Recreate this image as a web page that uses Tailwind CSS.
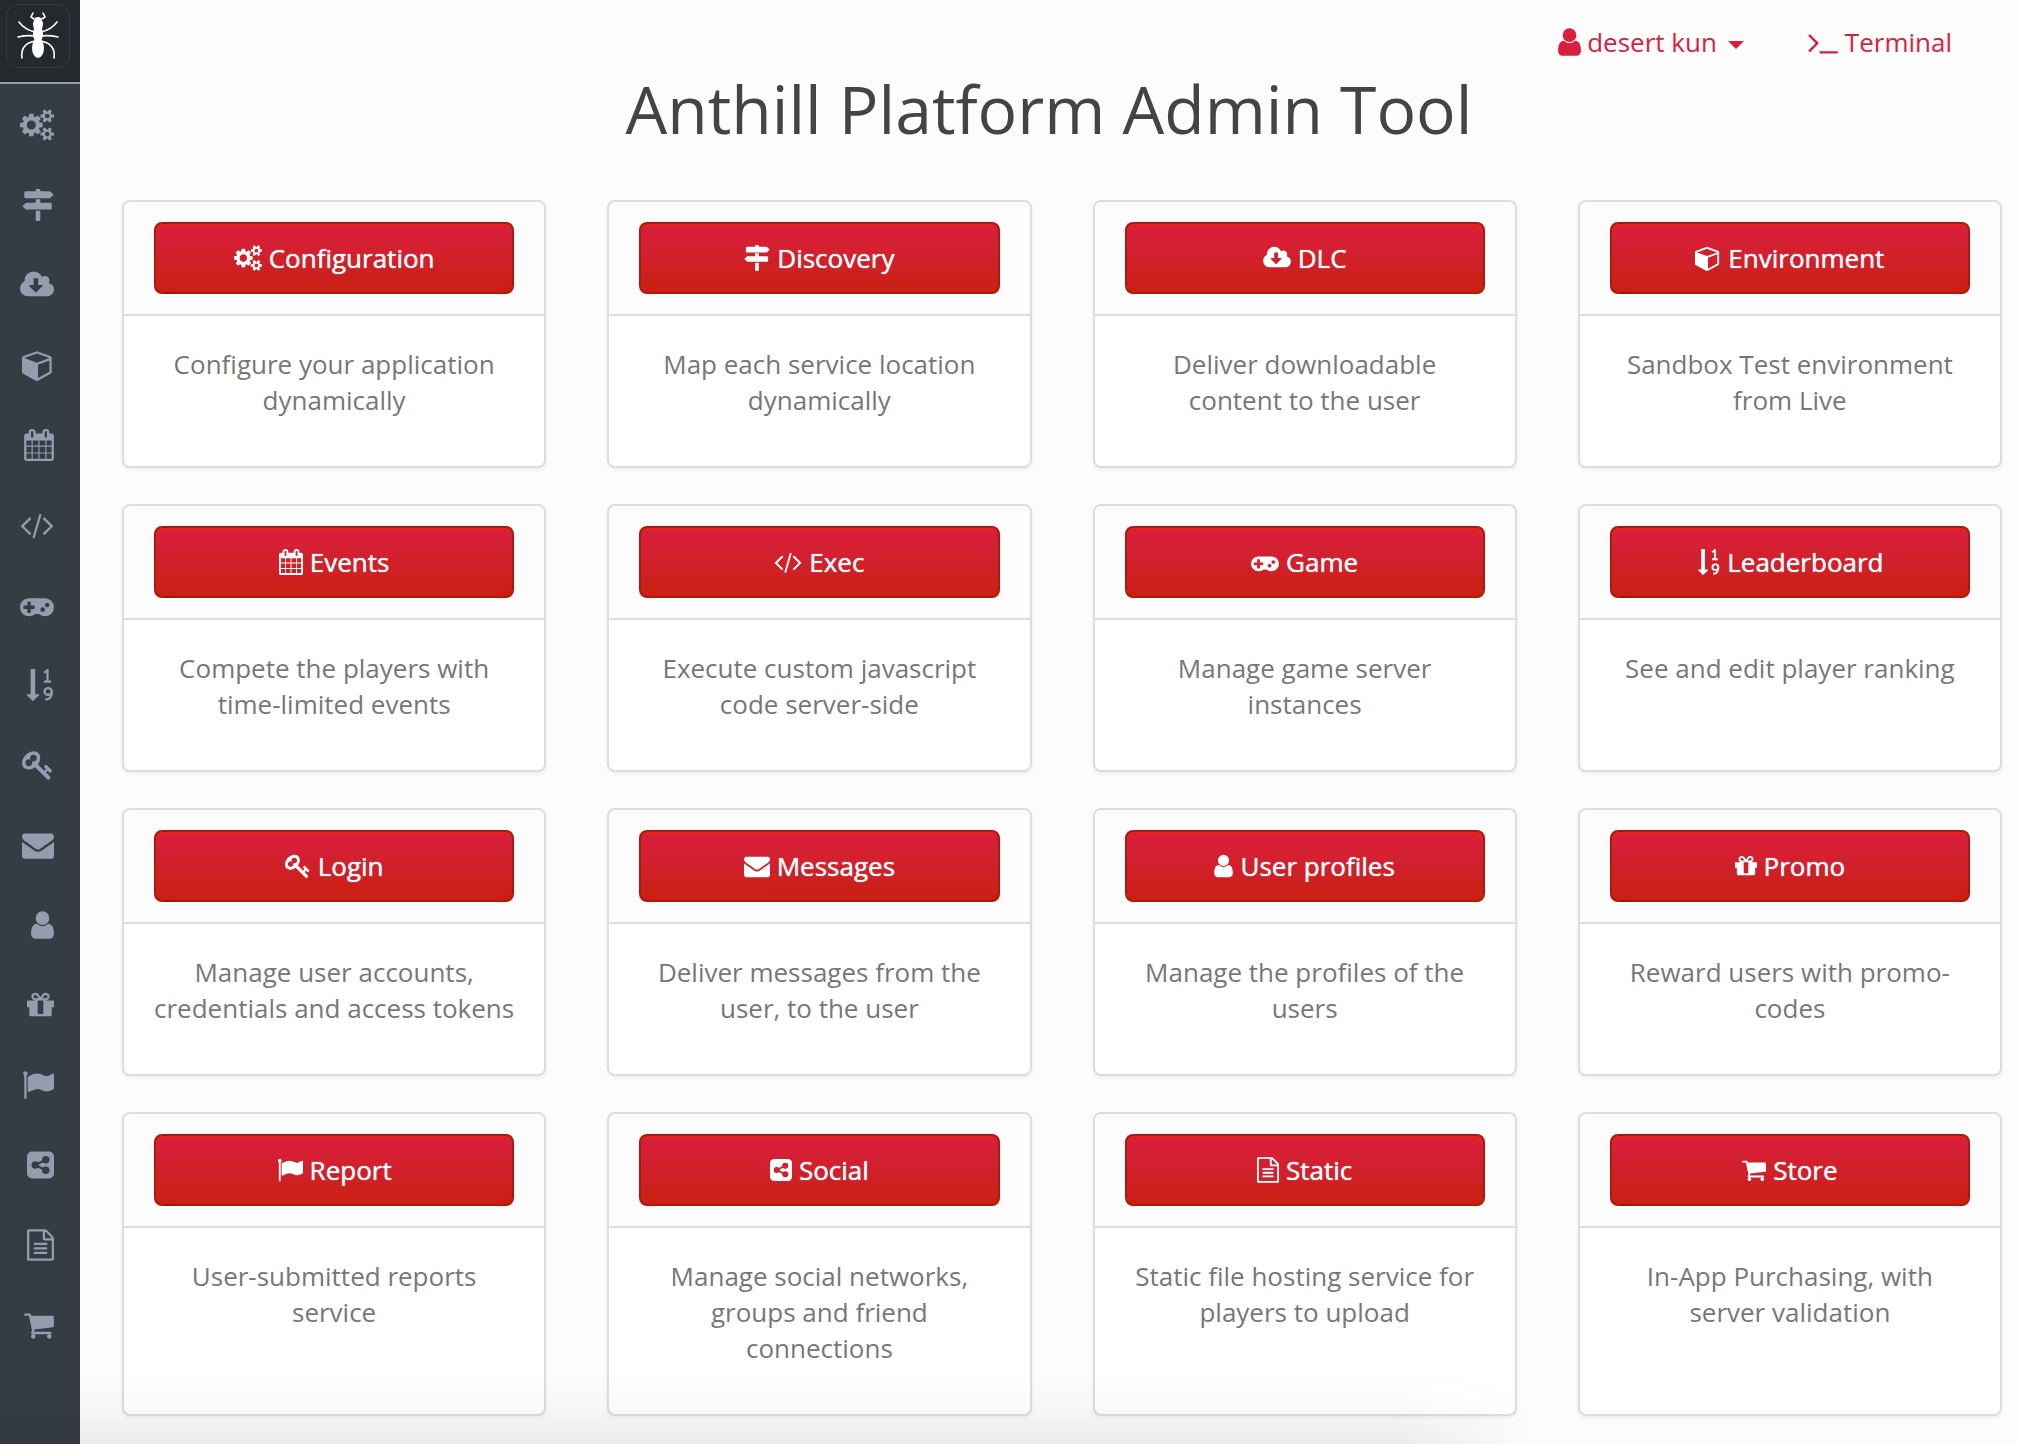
<!DOCTYPE html>
<html lang="en">
<head>
<meta charset="utf-8">
<title>Anthill Platform Admin Tool</title>
<script src="https://cdn.jsdelivr.net/npm/@tailwindcss/browser@4"></script>
</head>
<body class="relative min-h-screen bg-[#fcfcfc] font-['Open_Sans',sans-serif] text-[26px] leading-9 text-[#777]">
<svg class="absolute size-0" aria-hidden="true">
  <symbol id="cogs" viewBox="-64 0 1920 1792"><path d="M832 896q0-106-75-181t-181-75-181 75-75 181 75 181 181 75 181-75 75-181zm768 512q0-52-38-90t-90-38-90 38-38 90q0 53 37.5 90.5t90.5 37.5 90.5-37.5 37.5-90.5zm0-1024q0-52-38-90t-90-38-90 38-38 90q0 53 37.5 90.5t90.5 37.5 90.5-37.5 37.5-90.5zm-384 421v185q0 10-7 19.5t-16 10.5l-155 24q-11 35-32 76 34 48 90 115 7 11 7 20 0 12-7 19-23 30-82.5 89.5t-78.5 59.5q-11 0-21-7l-115-90q-37 19-77 31-11 108-23 155-7 24-30 24h-186q-11 0-20-7.5t-10-17.5l-23-153q-34-10-75-31l-118 89q-7 7-20 7-11 0-21-8-144-133-144-160 0-9 7-19 10-14 41-53t47-61q-23-44-35-82l-152-24q-10-1-17-9.5t-7-19.5v-185q0-10 7-19.5t16-10.5l155-24q11-35 32-76-34-48-90-115-7-11-7-20 0-12 7-20 22-30 82-89t79-59q11 0 21 7l115 90q34-18 77-32 11-108 23-154 7-24 30-24h186q11 0 20 7.5t10 17.5l23 153q34 10 75 31l118-89q8-7 20-7 11 0 21 8 144 133 144 160 0 8-7 19-12 16-42 54t-45 60q23 48 34 82l152 23q10 2 17 10.5t7 19.5zm640 533v140q0 16-149 31-12 27-30 52 51 113 51 138 0 4-4 7-122 71-124 71-8 0-46-47t-52-68q-20 2-30 2t-30-2q-14 21-52 68t-46 47q-2 0-124-71-4-3-4-7 0-25 51-138-18-25-30-52-149-15-149-31v-140q0-16 149-31 13-29 30-52-51-113-51-138 0-4 4-7 4-2 35-20t59-34 30-16q8 0 46 46.5t52 67.5q20-2 30-2t30 2q51-71 92-112l6-2q4 0 124 70 4 3 4 7 0 25-51 138 17 23 30 52 149 15 149 31zm0-1024v140q0 16-149 31-12 27-30 52 51 113 51 138 0 4-4 7-122 71-124 71-8 0-46-47t-52-68q-20 2-30 2t-30-2q-14 21-52 68t-46 47q-2 0-124-71-4-3-4-7 0-25 51-138-18-25-30-52-149-15-149-31v-140q0-16 149-31 13-29 30-52-51-113-51-138 0-4 4-7 4-2 35-20t59-34 30-16q8 0 46 46.5t52 67.5q20-2 30-2t30 2q51-71 92-112l6-2q4 0 124 70 4 3 4 7 0 25-51 138 17 23 30 52 149 15 149 31z"/></symbol>
  <symbol id="signs" viewBox="0 0 1792 1792"><path d="M1745 297q10 10 10 23t-10 23l-141 141q-28 28-68 28h-1344q-26 0-45-19t-19-45v-256q0-26 19-45t45-19h576v-64q0-26 19-45t45-19h128q26 0 45 19t19 45v64h512q40 0 68 28zm-977 919h256v512q0 26-19 45t-45 19h-128q-26 0-45-19t-19-45v-512zm832-448q26 0 45 19t19 45v256q0 26-19 45t-45 19h-1344q-40 0-68-28l-141-141q-10-10-10-23t10-23l141-141q28-28 68-28h512v-192h256v192h576z"/></symbol>
  <symbol id="cloud" viewBox="0 0 1920 1792"><path d="M1280 928q0-14-9-23t-23-9h-224v-352q0-13-9.5-22.5t-22.5-9.5h-192q-13 0-22.5 9.5t-9.5 22.5v352h-224q-13 0-22.5 9.5t-9.5 22.5q0 14 9 23l352 352q9 9 23 9t23-9l351-351q10-12 10-24zm640 224q0 159-112.5 271.5t-271.5 112.5h-1088q-185 0-316.5-131.5t-131.5-316.5q0-130 70-240t188-165q-2-30-2-43 0-212 150-362t362-150q156 0 285.5 87t188.5 231q71-62 166-62 106 0 181 75t75 181q0 76-41 138 130 31 213.5 135.5t83.5 238.5z"/></symbol>
  <symbol id="cube" viewBox="0 0 1792 1792"><path d="M896 1629l640-349v-636l-640 233v752zm-64-865l698-254-698-254-698 254zm832-252v768q0 35-18 65t-49 47l-704 384q-28 16-61 16t-61-16l-704-384q-31-17-49-47t-18-65v-768q0-40 23-73t61-47l704-256q22-8 44-8t44 8l704 256q38 14 61 47t23 73z"/></symbol>
  <symbol id="calendar" viewBox="64 0 1664 1792"><path d="M192 1664h288v-288h-288v288zm352 0h320v-288h-320v288zm-352-352h288v-320h-288v320zm352 0h320v-320h-320v320zm-352-384h288v-288h-288v288zm736 736h320v-288h-320v288zm-384-736h320v-288h-320v288zm768 736h288v-288h-288v288zm-384-352h320v-320h-320v320zm-352-864v-288q0-13-9.5-22.5t-22.5-9.5h-64q-13 0-22.5 9.5t-9.5 22.5v288q0 13 9.5 22.5t22.5 9.5h64q13 0 22.5-9.5t9.5-22.5zm736 864h288v-320h-288v320zm-384-384h320v-288h-320v288zm384 0h288v-288h-288v288zm32-480v-288q0-13-9.5-22.5t-22.5-9.5h-64q-13 0-22.5 9.5t-9.5 22.5v288q0 13 9.5 22.5t22.5 9.5h64q13 0 22.5-9.5t9.5-22.5zm384-64v1280q0 52-38 90t-90 38h-1408q-52 0-90-38t-38-90v-1280q0-52 38-90t90-38h128v-96q0-66 47-113t113-47h64q66 0 113 47t47 113v96h384v-96q0-66 47-113t113-47h64q66 0 113 47t47 113v96h128q52 0 90 38t38 90z"/></symbol>
  <symbol id="code" viewBox="64 0 1920 1792"><path d="M681 1399l-50 50q-10 10-23 10t-23-10l-466-466q-10-10-10-23t10-23l466-466q10-10 23-10t23 10l50 50q10 10 10 23t-10 23l-393 393 393 393q10 10 10 23t-10 23zm591-1067l-373 1291q-4 13-15.5 19.5t-23.5 2.5l-62-17q-13-4-19.5-15.5t-2.5-24.5l373-1291q4-13 15.5-19.5t23.5-2.5l62 17q13 4 19.5 15.5t2.5 24.5zm657 651l-466 466q-10 10-23 10t-23-10l-50-50q-10-10-10-23t10-23l393-393-393-393q-10-10-10-23t10-23l50-50q10-10 23-10t23 10l466 466q10 10 10 23t-10 23z"/></symbol>
  <symbol id="gamepad" viewBox="0 0 1920 1792"><path d="M832 1088v-128q0-14-9-23t-23-9h-192v-192q0-14-9-23t-23-9h-128q-14 0-23 9t-9 23v192h-192q-14 0-23 9t-9 23v128q0 14 9 23t23 9h192v192q0 14 9 23t23 9h128q14 0 23-9t9-23v-192h192q14 0 23-9t9-23zm576 64q0-53-37.5-90.5t-90.5-37.5-90.5 37.5-37.5 90.5 37.5 90.5 90.5 37.5 90.5-37.5 37.5-90.5zm256-256q0-53-37.5-90.5t-90.5-37.5-90.5 37.5-37.5 90.5 37.5 90.5 90.5 37.5 90.5-37.5 37.5-90.5zm256 128q0 212-150 362t-362 150q-192 0-338-128h-220q-146 128-338 128-212 0-362-150t-150-362 150-362 362-150h896q212 0 362 150t150 362z"/></symbol>
  <symbol id="sort" viewBox="0 0 1664 1792"><path d="M844 1440q0 12-10 24l-319 319q-10 9-23 9-12 0-23-9l-320-320q-15-16-7-35 8-20 30-20h192v-1376q0-14 9-23t23-9h192q14 0 23 9t9 23v1376h192q14 0 23 9t9 23z"/><g fill="none" stroke="currentColor" stroke-width="125"><path d="M1120 215l190-150v640M1110 705h400"/><ellipse cx="1345" cy="1255" rx="205" ry="190"/><path d="M1550 1255q20 460-370 455"/></g></symbol>
  <symbol id="key" viewBox="0 0 1792 1792"><path d="M832 512q0-80-56-136t-136-56-136 56-56 136q0 42 19 83-41-19-83-19-80 0-136 56t-56 136 56 136 136 56 136-56 56-136q0-42-19-83 41 19 83 19 80 0 136-56t56-136zm851 704q0 17-49 66t-66 49q-9 0-28.5-16t-36.5-33-38.5-40-24.5-26l-96 96 220 220q28 28 28 68 0 42-39 81t-81 39q-40 0-68-28l-671-671q-176 131-365 131-163 0-265.5-102.5t-102.5-265.5q0-160 95-313t248-248 313-95q163 0 265.5 102.5t102.5 265.5q0 189-131 365l355 355 96-96q-3-3-26-24.5t-40-38.5-33-36.5-16-28.5q0-17 49-66t66-49q13 0 23 10 6 6 46 44.5t82 79.5 86.5 86 73 78 28.5 41z"/></symbol>
  <symbol id="envelope" viewBox="0 0 1792 1792"><path d="M1792 710v794q0 66-47 113t-113 47h-1472q-66 0-113-47t-47-113v-794q44 49 101 87 362 246 497 345 57 42 92.5 65.5t94.5 48 110 24.5h2q51 0 110-24.5t94.5-48 92.5-65.5q170-123 498-345 57-39 100-87zm0-294q0 79-49 151t-122 123q-376 261-468 325-10 7-42.5 30.5t-54 38-52 32.5-57.5 27-50 9h-2q-23 0-50-9t-57.5-27-52-32.5-54-38-42.5-30.5q-91-64-262-182.5t-205-142.5q-62-42-117-115.5t-55-136.5q0-78 41.5-130t118.5-52h1472q65 0 112.5 47t47.5 113z"/></symbol>
  <symbol id="user" viewBox="256 0 1280 1792"><path d="M1536 1399q0 109-62.5 187t-150.5 78h-854q-88 0-150.5-78t-62.5-187q0-85 8.5-160.5t31.5-152 58.5-131 94-89 134.5-34.5q131 128 313 128t313-128q76 0 134.5 34.5t94 89 58.5 131 31.5 152 8.5 160.5zm-256-887q0 159-112.5 271.5t-271.5 112.5-271.5-112.5-112.5-271.5 112.5-271.5 271.5-112.5 271.5 112.5 112.5 271.5z"/></symbol>
  <symbol id="gift" viewBox="128 0 1536 1792"><path d="M1056 1356v-716h-320v716q0 25 18 38.5t46 13.5h192q28 0 46-13.5t18-38.5zm-456-844h195l-126-161q-26-31-69-31-40 0-68 28t-28 68 28 68 68 28zm688-96q0-40-28-68t-68-28q-43 0-69 31l-125 161h194q40 0 68-28t28-68zm376 256v320q0 14-9 23t-23 9h-96v416q0 40-28 68t-68 28h-1088q-40 0-68-28t-28-68v-416h-96q-14 0-23-9t-9-23v-320q0-14 9-23t23-9h440q-93 0-158.5-65.5t-65.5-158.5 65.5-158.5 158.5-65.5q107 0 168 77l128 165 128-165q61-77 168-77 93 0 158.5 65.5t65.5 158.5-65.5 158.5-158.5 65.5h440q14 0 23 9t9 23z"/></symbol>
  <symbol id="flag" viewBox="0 0 1792 1792"><path d="M320 256q0 72-64 110v1266q0 13-9.5 22.5t-22.5 9.5h-64q-13 0-22.5-9.5t-9.5-22.5v-1266q-64-38-64-110 0-53 37.5-90.5t90.5-37.5 90.5 37.5 37.5 90.5zm1472 64v763q0 25-12.5 38.5t-39.5 27.5q-215 116-369 116-61 0-123.5-22t-108.5-48-115.5-48-142.5-22q-192 0-464 146-17 9-33 9-26 0-45-19t-19-45v-742q0-32 31-55 21-14 79-43 236-120 421-120 107 0 200 29t219 88q38 19 88 19 54 0 117.5-21t110-47 88-47 54.5-21q26 0 45 19t19 45z"/></symbol>
  <mask id="share-holes" maskUnits="userSpaceOnUse" x="0" y="0" width="1536" height="1792"><rect width="1536" height="1792" fill="#fff"/><path d="M1067 597L469 896l598 299" fill="none" stroke="#000" stroke-width="130"/><circle cx="469" cy="896" r="213" fill="#000"/><circle cx="1067" cy="597" r="213" fill="#000"/><circle cx="1067" cy="1195" r="213" fill="#000"/></mask>
  <symbol id="share" viewBox="0 0 1536 1792"><rect y="128" width="1536" height="1536" rx="288" mask="url(#share-holes)"/></symbol>
  <symbol id="file" viewBox="128 0 1536 1792"><path d="M1596 380q28 28 48 76t20 88v1152q0 40-28 68t-68 28h-1344q-40 0-68-28t-28-68v-1600q0-40 28-68t68-28h896q40 0 88 20t76 48zm-444-244v376h376q-10-29-22-41l-313-313q-12-12-41-22zm384 1528v-1024h-416q-40 0-68-28t-28-68v-416h-768v1536h1280zm-1024-864q0-14 9-23t23-9h704q14 0 23 9t9 23v64q0 14-9 23t-23 9h-704q-14 0-23-9t-9-23v-64zm736 224q14 0 23 9t9 23v64q0 14-9 23t-23 9h-704q-14 0-23-9t-9-23v-64q0-14 9-23t23-9h704zm0 256q14 0 23 9t9 23v64q0 14-9 23t-23 9h-704q-14 0-23-9t-9-23v-64q0-14 9-23t23-9h704z"/></symbol>
  <symbol id="cart" viewBox="64 0 1664 1792"><path d="M704 1536q0 52-38 90t-90 38-90-38-38-90 38-90 90-38 90 38 38 90zm896 0q0 52-38 90t-90 38-90-38-38-90 38-90 90-38 90 38 38 90zm128-1088v512q0 24-16.5 42.5t-40.5 21.5l-1044 122q13 60 13 70 0 16-24 64h920q26 0 45 19t19 45-19 45-45 19h-1024q-26 0-45-19t-19-45q0-11 8-31.5t16-36 21.5-40 15.5-29.5l-177-823h-204q-26 0-45-19t-19-45 19-45 45-19h256q16 0 28.5 6.5t19.5 15.5 13 24.5 8 26 5.5 29.5 4.5 26h1201q26 0 45 19t19 45z"/></symbol>
  <symbol id="terminal" viewBox="64 0 1664 1792"><path d="M649 983l-466 466q-10 10-23 10t-23-10l-50-50q-10-10-10-23t10-23l393-393-393-393q-10-10-10-23t10-23l50-50q10-10 23-10t23 10l466 466q10 10 10 23t-10 23zm1079 457v64q0 14-9 23t-23 9h-960q-14 0-23-9t-9-23v-64q0-14 9-23t23-9h960q14 0 23 9t9 23z"/></symbol>
</svg>

<div class="flex min-h-screen">
  <aside class="w-20 shrink-0 bg-[#353c44] text-[#929dae]">
    <a href="#" aria-label="Home" class="flex h-[84px] items-start border-b-2 border-[#929dae] bg-[#25282c] pt-1 pl-1.5">
      <span class="flex size-16 items-center justify-center rounded-xl border border-[#353b43]">
        <svg class="size-[62px] text-white" viewBox="0 0 62 62" fill="none" stroke="currentColor" stroke-linecap="round" aria-hidden="true">
          <g fill="currentColor" stroke="none"><path d="M28 13q3-2 6 0l2 5q0 5-2 7h-6q-2-2-2-7z"/><ellipse cx="31" cy="29" rx="5" ry="8"/><ellipse cx="31" cy="43" rx="6" ry="10"/></g>
          <path stroke-width="1.6" d="M27 14l-3-2 2-4M35 14l3-2-2-4"/>
          <path stroke-width="1.6" d="M28 27q-10-2-16-10M34 27q10-2 16-10M28 31q-8-1-17 1M34 31q8-1 17 1M28 36q-15 3-13 17M34 36q15 3 13 17"/>
        </svg>
      </span>
    </a>
    <nav id="side" aria-label="Services" class="pt-px"></nav>
  </aside>

  <div class="min-w-0 flex-1">
    <header class="flex h-[84px] justify-end pt-6 pr-[66px] text-[#da1f3d]">
      <button type="button" class="flex h-9 items-center"><svg class="mr-1.5 h-8 w-[23px] fill-current" aria-hidden="true"><use href="#user"/></svg>desert kun<svg class="mt-1.5 ml-[11px] h-2 w-4 fill-current" viewBox="0 0 16 8" aria-hidden="true"><path d="M0 0h16L8 8z"/></svg></button>
      <a href="#" class="ml-16 flex h-9 items-center"><svg class="mr-[7px] h-8 w-[30px] fill-current" aria-hidden="true"><use href="#terminal"/></svg>Terminal</a>
    </header>
    <h1 class="-mt-[21px] h-[137px] text-center text-[66px] leading-[90px] text-[#444]">Anthill Platform Admin Tool</h1>
    <main id="cards" class="grid grid-cols-4 gap-x-[61px] gap-y-9 pr-4 pb-7 pl-[42px]"></main>
  </div>
</div>
<div class="pointer-events-none absolute inset-x-0 bottom-0 h-[72px] bg-linear-to-b from-transparent via-black/2 to-black/7 [mask-image:linear-gradient(to_right,black_69%,transparent_76%)]"></div>

<script>
  // icon, icon width in the side bar, icon width in a button, title, description
  const services = [
    ['cogs', 'w-[34px]', 'w-[28px]', 'Configuration', 'Configure your application dynamically'],
    ['signs', 'w-[32px]', 'w-[26px]', 'Discovery', 'Map each service location dynamically'],
    ['cloud', 'w-[34px]', 'w-[28px]', 'DLC', 'Deliver downloadable content to the user'],
    ['cube', 'w-[32px]', 'w-[26px]', 'Environment', 'Sandbox Test environment from Live'],
    ['calendar', 'w-[30px]', 'w-[24px]', 'Events', 'Compete the players with time-limited events'],
    ['code', 'w-[34px]', 'w-[28px]', 'Exec', 'Execute custom javascript code server-side'],
    ['gamepad', 'w-[34px]', 'w-[28px]', 'Game', 'Manage game server instances'],
    ['sort', 'w-[30px]', 'w-[24px]', 'Leaderboard', 'See and edit player ranking'],
    ['key', 'w-[32px]', 'w-[26px]', 'Login', 'Manage user accounts, credentials and access tokens'],
    ['envelope', 'w-[32px]', 'w-[26px]', 'Messages', 'Deliver messages from the user, to the user'],
    ['user', 'w-[23px]', 'w-[19px]', 'User profiles', 'Manage the profiles of the users'],
    ['gift', 'w-[27px]', 'w-[22px]', 'Promo', 'Reward users with promo-codes'],
    ['flag', 'w-[32px]', 'w-[26px]', 'Report', 'User-submitted reports service'],
    ['share', 'w-[27px]', 'w-[22px]', 'Social', 'Manage social networks, groups and friend connections'],
    ['file', 'w-[27px]', 'w-[22px]', 'Static', 'Static file hosting service for players to upload'],
    ['cart', 'w-[30px]', 'w-[24px]', 'Store', 'In-App Purchasing, with server validation']
  ];
  document.getElementById('side').innerHTML = services.map(([icon, wide, small, title]) => `
    <a href="#" aria-label="${title}" class="flex h-20 items-center justify-end pr-[26px]"><svg class="h-8 ${wide} fill-current" aria-hidden="true"><use href="#${icon}"/></svg></a>`).join('');
  document.getElementById('cards').innerHTML = services.map(([icon, wide, small, title, text]) => `
    <section class="rounded-lg border-2 border-[#ddd] bg-white text-center shadow-[0_2px_4px_rgba(0,0,0,0.06)]">
      <div class="rounded-t-md border-b-2 border-[#ddd] bg-[#fcfcfc] px-[30px] py-5">
        <button type="button" class="flex h-[72px] w-full items-center justify-center rounded-lg border-2 border-[#ac1a0e] bg-linear-to-b from-[#da1f3d] to-[#c9200e] text-white shadow-[inset_0_3px_2px_-1px_#e8251a] [text-shadow:0_0_1px_#fff]"><svg class="mr-[7px] h-[26px] ${small} fill-current" aria-hidden="true"><use href="#${icon}"/></svg>${title}</button>
      </div>
      <p class="px-[30px] pt-[30px] pb-12">${text}</p>
    </section>`).join('');
</script>
</body>
</html>
